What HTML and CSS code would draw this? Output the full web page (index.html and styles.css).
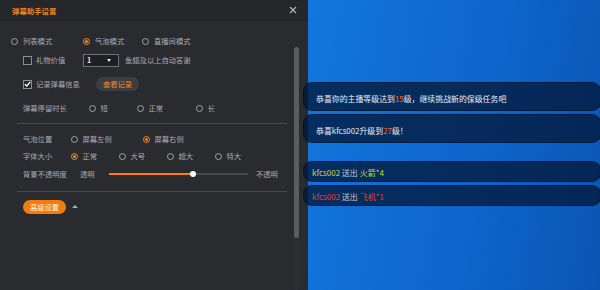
FILE: index.html
```html
<!DOCTYPE html>
<html lang="zh-CN">
<head>
<meta charset="utf-8">
<link rel="stylesheet" href="styles.css">
</head>
<body>
<div class="panel">
  <div class="titlebar">
    <span class="title">弹幕助手设置</span>
    <svg class="close" width="8" height="8" viewBox="0 0 8 8"><path d="M1 1L7 7M7 1L1 7" stroke="#b8b9bd" stroke-width="1.1" fill="none"/></svg>
  </div>
  <div class="body">
    <div class="content">
      <div class="row r-mode">
        <label class="opt"><span class="radio"></span>列表模式</label>
        <label class="opt"><span class="radio on"></span>气泡模式</label>
        <label class="opt"><span class="radio"></span>直播间模式</label>
      </div>
      <div class="row r-gift">
        <label class="opt"><span class="check"></span>礼物价值</label>
        <div class="select"><span>1</span><span class="caret"></span></div>
        <span class="lbl">鱼翅及以上自动答谢</span>
      </div>
      <div class="row r-log">
        <label class="opt"><span class="check on"><svg width="7" height="6" viewBox="0 0 7 6"><path d="M0.8 3.2L2.7 5L6.3 0.8" stroke="#fff" stroke-width="1.3" fill="none"/></svg></span>记录弹幕信息</label>
        <span class="btn-dark">查看记录</span>
      </div>
      <div class="row r-stay">
        <span class="lbl">弹幕停留时长</span>
        <label class="opt"><span class="radio"></span>短</label>
        <label class="opt"><span class="radio"></span>正常</label>
        <label class="opt"><span class="radio"></span>长</label>
      </div>
      <div class="divider d1"></div>
      <div class="row r-pos">
        <span class="lbl">气泡位置</span>
        <label class="opt"><span class="radio"></span>屏幕左侧</label>
        <label class="opt"><span class="radio on"></span>屏幕右侧</label>
      </div>
      <div class="row r-size">
        <span class="lbl">字体大小</span>
        <label class="opt"><span class="radio on"></span>正常</label>
        <label class="opt"><span class="radio"></span>大号</label>
        <label class="opt"><span class="radio"></span>超大</label>
        <label class="opt"><span class="radio"></span>特大</label>
      </div>
      <div class="row r-opacity">
        <span class="lbl">背景不透明度</span>
        <span class="lbl">透明</span>
        <div class="slider"><div class="fill" style="width:84px"></div><span class="knob"></span></div>
        <span class="lbl">不透明</span>
      </div>
      <div class="divider d2"></div>
      <div class="row r-adv">
        <span class="btn-orange">高级设置</span>
        <span class="tri"></span>
      </div>
    </div>
    <div class="scroll"><div class="thumb"></div></div>
  </div>
</div>
<div class="stage">
  <div class="bubble big b1"><span class="txt">恭喜你的主播等级达到<em class="num">15</em>级，继续挑战新的保级任务吧</span></div>
  <div class="bubble big b2"><span class="txt">恭喜kfcs002升级到<em class="num">27</em>级！</span></div>
  <div class="bubble small b3"><span class="txt"><span class="yg">kfcs002</span> 送出 <span class="yg">火箭*4</span></span></div>
  <div class="bubble small b4"><span class="txt"><span class="rd">kfcs002</span> 送出 <span class="rd">飞机*1</span></span></div>
</div>
</body>
</html>
```
FILE: styles.css
```css
* { box-sizing: border-box; }
html, body { margin: 0; padding: 0; }
body {
  width: 600px;
  height: 290px;
  overflow: hidden;
  display: flex;
  font-family: "Noto Sans CJK SC", "Noto Sans", sans-serif;
  font-size: 7.3px;
  color: #a9aaae;
}
.panel {
  width: 308px;
  height: 290px;
  flex: none;
  background: #2a2b2f;
  display: flex;
  flex-direction: column;
}
.titlebar {
  height: 21px;
  flex: none;
  background: #252629;
  display: flex;
  align-items: center;
  justify-content: space-between;
  padding: 0 11px 0 12px;
}
.title {
  color: #f08620;
  font-size: 7.4px;
  font-weight: bold;
}
.close { margin-top: -1px; }
.body {
  flex: 1;
  display: flex;
}
.content {
  flex: 1;
  display: flex;
  flex-direction: column;
}
.row {
  height: 14px;
  line-height: 14px;
  display: grid;
  align-items: center;
  white-space: nowrap;
}
.opt {
  display: flex;
  align-items: center;
  gap: 5px;
}
.radio {
  width: 7px;
  height: 7px;
  border-radius: 50%;
  border: 1px solid #a3a4a8;
  flex: none;
  position: relative;
}
.radio.on { border-color: #f08a2a; }
.radio.on::after {
  content: "";
  position: absolute;
  left: 1px;
  top: 1px;
  width: 3px;
  height: 3px;
  border-radius: 50%;
  background: #f58a20;
}
.check {
  width: 9px;
  height: 9px;
  border: 1px solid #8d8e92;
  background: #26272a;
  flex: none;
  display: flex;
  align-items: center;
  justify-content: center;
}
.check svg { display: block; }
.opt:has(.check) { gap: 4px; }

.r-mode { margin-top: 13px; padding-left: 11px; grid-template-columns: 72px 59px auto; }
.r-gift { margin-top: 5px; padding-left: 23px; grid-template-columns: 60px 36px auto; }
.r-gift .lbl { padding-left: 6px; }
.select {
  height: 13px;
  width: 36px;
  border: 1px solid #707176;
  background: #1e1f22;
  display: flex;
  align-items: center;
  justify-content: space-between;
  padding: 0 7px 0 3px;
  color: #e8e8ea;
  font-size: 7px;
  font-weight: bold;
}
.caret {
  width: 0;
  height: 0;
  border-left: 2.5px solid transparent;
  border-right: 2.5px solid transparent;
  border-top: 3px solid #e8e8ea;
}
.r-log { margin-top: 10px; padding-left: 23px; grid-template-columns: 73px auto; }
.btn-dark {
  justify-self: start;
  width: 43px;
  height: 14px;
  line-height: 14px;
  text-align: center;
  border-radius: 7px;
  background: #3c3d41;
  color: #ef8a26;
}
.r-stay { margin-top: 10px; padding-left: 23px; grid-template-columns: 65.5px 48px 59px auto; }
.divider {
  height: 1px;
  background: #47484d;
  margin-left: 17px;
  margin-right: 7px;
}
.d1 { margin-top: 8px; }
.r-pos { margin-top: 8px; padding-left: 23px; grid-template-columns: 47.5px 72px auto; }
.r-size { margin-top: 3px; padding-left: 23px; grid-template-columns: 47.5px 48px 48px 48px auto; }
.r-opacity { margin-top: 4px; padding-left: 23px; grid-template-columns: 57px 29px 139px auto; }
.r-opacity .lbl:last-child { padding-left: 8px; }
.slider {
  height: 2px;
  background: #48494d;
  position: relative;
}
.fill {
  height: 2px;
  background: #ff7d10;
}
.knob {
  position: absolute;
  left: 81px;
  top: -2px;
  width: 6px;
  height: 6px;
  border-radius: 50%;
  background: #fff;
}
.d2 { margin-top: 10px; }
.r-adv { margin-top: 8px; padding-left: 23px; display: flex; gap: 6px; }
.btn-orange {
  width: 43px;
  height: 14px;
  line-height: 14px;
  text-align: center;
  border-radius: 7px;
  background: #f47c0c;
  color: #fff3e6;
}
.tri {
  width: 0;
  height: 0;
  border-left: 3px solid transparent;
  border-right: 3px solid transparent;
  border-bottom: 3px solid #a8a9ad;
  margin-top: -1px;
}
.scroll {
  width: 5px;
  margin: 26px 9px 0 0;
  background: #2e2f33;
  border-radius: 2px;
}
.thumb {
  height: 191px;
  border-radius: 3px;
  background: #5b5c60;
}

.stage {
  flex: 1;
  height: 290px;
  background: linear-gradient(100deg, #1276de 0%, #0e66cc 55%, #0a55b4 100%);
  display: flex;
  flex-direction: column;
  padding-top: 82px;
  position: relative;
}
.bubble {
  margin-left: -5px;
  margin-right: -1px;
  background: rgba(4, 24, 56, 0.76);
  border: 1px solid rgba(0, 10, 30, 0.45);
  border-radius: 9px;
  color: #e9eef6;
  font-size: 7.9px;
  white-space: nowrap;
  display: flex;
  align-items: center;
}
.txt { display: block; }
.big { height: 29px; padding: 4px 0 0 12px; }
.small { height: 21px; padding: 1px 0 0 8px; color: #c3c9d3; font-size: 8px; }
.b2 { margin-top: 3px; }
.b3 { margin-top: 18px; }
.b4 { margin-top: 3px; }
.num { font-style: normal; color: #ff6c1a; }
.yg { color: #c9dc3c; }
.rd { color: #e6431c; }
```
